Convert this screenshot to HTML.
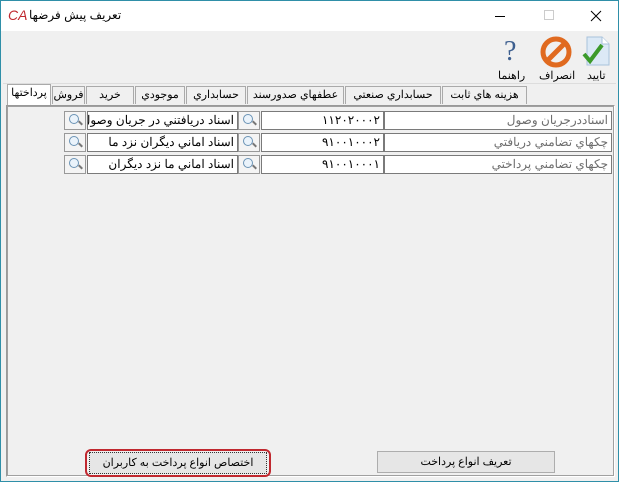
<!DOCTYPE html><html><head><meta charset="utf-8"><style>
*{margin:0;padding:0;box-sizing:border-box}
body{width:619px;height:482px;background:#f0f0f0;font-family:"Liberation Sans","Noto Sans CJK SC",sans-serif;font-size:12px;position:relative;overflow:hidden;border:1px solid #2f8fa8}
.a{position:absolute}
.title{left:0;top:0;width:617px;height:30px;background:#fff}
.f{position:absolute;height:19px;background:#fff;border:1px solid #7a7a7a;direction:rtl;padding:0 3px;line-height:17px;font-size:12px;white-space:nowrap;overflow:hidden}
.g{color:#6d6d6d}
.s{position:absolute;width:22px;height:19px;background:#f4f4f4;border:1px solid #999}
.s:after{content:"";position:absolute;left:4px;top:2px;width:8px;height:8px;border:1.5px solid #6a93b5;border-radius:50%;background:#eaf3fb}
.s:before{content:"";position:absolute;left:13px;top:10px;width:5px;height:2px;background:#777;transform:rotate(45deg)}
.tab{position:absolute;top:85px;height:18px;border:1px solid #aaa;border-bottom:none;background:#f0f0f0;font-size:11px;line-height:16px;text-align:center;direction:rtl}
.btn{position:absolute;height:22px;background:#e6e6e6;border:1px solid #adadad;text-align:center;font-size:11px;line-height:20px;direction:rtl}
</style></head><body>
<div class="a title"></div>
<div class="a" style="left:7px;top:6px;color:#c0282f;font-size:14px;font-style:italic">CA</div>
<div class="a" style="left:28px;top:7px;font-size:12px;direction:rtl">تعريف پيش فرضها</div>
<div class="a" style="left:494px;top:15px;width:10px;height:1px;background:#000"></div>
<div class="a" style="left:543px;top:9px;width:10px;height:10px;border:1px solid #ccc"></div>
<svg class="a" style="left:589px;top:9px" width="12" height="12"><path d="M1 1L11 11M11 1L1 11" stroke="#000" stroke-width="1"/></svg>
<svg class="a" style="left:580px;top:34px" width="32" height="32"><path d="M6 2h15l7 7v21H6z" fill="#dce9f6" stroke="#a9c2db"/><path d="M21 2v7h7" fill="#fff" stroke="#a9c2db"/><path d="M3 19l6 7 12-16" stroke="#3c9a2a" stroke-width="4" fill="none"/></svg>
<svg class="a" style="left:539px;top:35px" width="32" height="32"><circle cx="16" cy="16" r="13" fill="none" stroke="#e06a20" stroke-width="5"/><path d="M7 25L25 7" stroke="#e06a20" stroke-width="5"/></svg>
<div class="a" style="left:503px;top:35px;font-size:28px;color:#3d5f8f;font-family:'Liberation Serif',serif">?</div>
<div class="a" style="left:586px;top:68px;font-size:11px">تاييد</div>
<div class="a" style="left:538px;top:68px;font-size:11px">انصراف</div>
<div class="a" style="left:497px;top:68px;font-size:11px">راهنما</div>
<div class="a" style="left:2px;top:82px;width:613px;height:1px;background:#ddd"></div>
<div class="tab" style="left:6px;width:44px;background:#fff;top:83px;height:21px">پرداختها</div>
<div class="tab" style="left:51px;width:33px">فروش</div>
<div class="tab" style="left:85px;width:48px">خريد</div>
<div class="tab" style="left:134px;width:50px">موجودي</div>
<div class="tab" style="left:185px;width:60px">حسابداري</div>
<div class="tab" style="left:246px;width:97px">عطفهاي صدورسند</div>
<div class="tab" style="left:344px;width:96px">حسابداري صنعتي</div>
<div class="tab" style="left:441px;width:85px">هزينه هاي ثابت</div>
<div class="a" style="left:5px;top:104px;width:609px;height:372px;border:1px solid #999;border-right-color:#fff;border-bottom-color:#fff"></div>
<div class="a" style="left:6px;top:105px;width:607px;height:370px;border:1px solid #a0a0a0"></div>
<div class="f g" style="left:383px;top:110px;width:228px">اسناددرجريان وصول</div>
<div class="f" style="left:260px;top:110px;width:123px">۱۱۲۰۲۰۰۰۲</div>
<div class="s" style="left:237px;top:110px"></div>
<div class="f" style="left:86px;top:110px;width:151px">اسناد دريافتني در جريان وصول</div>
<div class="s" style="left:63px;top:110px"></div>
<div class="f g" style="left:383px;top:132px;width:228px">چکهاي تضامني دريافتي</div>
<div class="f" style="left:260px;top:132px;width:123px">۹۱۰۰۱۰۰۰۲</div>
<div class="s" style="left:237px;top:132px"></div>
<div class="f" style="left:86px;top:132px;width:151px">اسناد اماني ديگران نزد ما</div>
<div class="s" style="left:63px;top:132px"></div>
<div class="f g" style="left:383px;top:154px;width:228px">چکهاي تضامني پرداختي</div>
<div class="f" style="left:260px;top:154px;width:123px">۹۱۰۰۱۰۰۰۱</div>
<div class="s" style="left:237px;top:154px"></div>
<div class="f" style="left:86px;top:154px;width:151px">اسناد اماني ما نزد ديگران</div>
<div class="s" style="left:63px;top:154px"></div>
<div class="a" style="left:84px;top:448px;width:186px;height:28px;border:2px solid #c0282f;border-radius:6px"></div>
<div class="btn" style="left:88px;top:451px;width:178px;border:1px dotted #333">اختصاص انواع پرداخت به کاربران</div>
<div class="btn" style="left:376px;top:450px;width:178px">تعريف انواع پرداخت</div>
</body></html>
